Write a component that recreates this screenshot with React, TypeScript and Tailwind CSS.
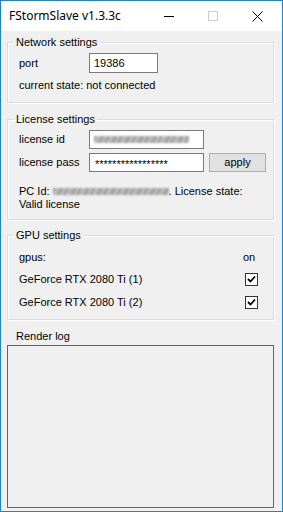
import React from "react";

function Check() {
  return (
    <div className="w-[13px] h-[13px] border border-[#333333] bg-white flex items-center justify-center">
      <svg width="9" height="9" viewBox="0 0 9 9">
        <path d="M1 4 L3.5 6.5 L8 1.5" fill="none" stroke="#000" strokeWidth="1.8" />
      </svg>
    </div>
  );
}

function Blur({ w }: { w: number }) {
  return (
    <span
      className="inline-block h-[7px] bg-[repeating-linear-gradient(115deg,#8c8c8c_0px,#c4c4c4_4px,#9a9a9a_8px,#d0d0d0_12px)] blur-[1px] align-middle"
      style={{ width: w }}
    />
  );
}

export default function App() {
  return (
    <div className="w-[283px] h-[512px] border border-[#1883d7] bg-[#f0f0f0] flex flex-col font-['Liberation_Sans',Arial,sans-serif] text-[11px] leading-[13px] text-black overflow-hidden">
      {/* Title bar */}
      <div className="h-[30px] bg-white flex items-center shrink-0">
        <span className="ml-[8px] font-['Noto_Sans',sans-serif] text-[12px] leading-[16px]">
          FStormSlave v1.3.3c
        </span>
        <div className="ml-auto mr-[3px] flex h-full">
          <div className="w-[44px] h-full flex items-center justify-center">
            <div className="w-[10px] h-px bg-black" />
          </div>
          <div className="w-[44px] h-full flex items-center justify-center">
            <div className="w-[10px] h-[10px] border border-[#cccccc]" />
          </div>
          <div className="w-[44px] h-full flex items-center justify-center">
            <svg width="11" height="11" viewBox="0 0 11 11">
              <path d="M0.5 0.5 L10.5 10.5 M10.5 0.5 L0.5 10.5" stroke="#000" strokeWidth="1" />
            </svg>
          </div>
        </div>
      </div>

      {/* Network settings */}
      <fieldset className="mt-[5px] ml-[6px] mr-[8px] border border-[#dcdcdc] shadow-[1px_1px_0_#ffffff,inset_1px_1px_0_#ffffff] pb-[10px]">
        <legend className="ml-[6px] px-[2px]">Network settings</legend>
        <div className="mt-[4px] flex items-center">
          <span className="ml-[11px] w-[70px]">port</span>
          <div className="w-[69px] h-[20px] border border-[#7a7a7a] bg-white flex items-center pl-[4px]">19386</div>
        </div>
        <div className="mt-[6px] ml-[11px]">current state: not connected</div>
      </fieldset>

      {/* License settings */}
      <fieldset className="mt-[10px] ml-[6px] mr-[8px] border border-[#dcdcdc] shadow-[1px_1px_0_#ffffff,inset_1px_1px_0_#ffffff] pb-[8px]">
        <legend className="ml-[6px] px-[2px]">License settings</legend>
        <div className="mt-[4px] flex items-center">
          <span className="ml-[11px] w-[70px]">license id</span>
          <div className="w-[115px] h-[19px] border border-[#7a7a7a] bg-white flex items-center pl-[4px]">
            <Blur w={95} />
          </div>
        </div>
        <div className="mt-[4px] flex items-center">
          <span className="ml-[11px] w-[70px]">license pass</span>
          <div className="w-[115px] h-[19px] border border-[#7a7a7a] bg-white flex items-center pl-[5px] pt-[3px]">
            *****************
          </div>
          <div className="ml-[5px] w-[57px] h-[19px] border border-[#adadad] bg-[#e1e1e1] flex items-center justify-center">
            apply
          </div>
        </div>
        <div className="mt-[13px] ml-[11px] flex items-center">
          <span>PC Id:</span>
          <span className="ml-[3px] flex"><Blur w={116} /></span>
          <span>. License state:</span>
        </div>
        <div className="ml-[11px]">Valid license</div>
      </fieldset>

      {/* GPU settings */}
      <fieldset className="mt-[9px] ml-[6px] mr-[8px] border border-[#dcdcdc] shadow-[1px_1px_0_#ffffff,inset_1px_1px_0_#ffffff] pb-[10px]">
        <legend className="ml-[6px] px-[2px]">GPU settings</legend>
        <div className="mt-[9px] flex items-center h-[13px]">
          <span className="ml-[11px] w-[224px]">gpus:</span>
          <span>on</span>
        </div>
        <div className="mt-[9px] flex items-center h-[13px]">
          <span className="ml-[11px] w-[226px]">GeForce RTX 2080 Ti (1)</span>
          <Check />
        </div>
        <div className="mt-[10px] flex items-center h-[13px]">
          <span className="ml-[11px] w-[226px]">GeForce RTX 2080 Ti (2)</span>
          <Check />
        </div>
      </fieldset>

      {/* Render log */}
      <div className="mt-[10px] ml-[15px]">Render log</div>
      <div className="mt-[2px] ml-[6px] mr-[8px] mb-[3px] flex-1 border border-[#646464] bg-[#f0f0f0]" />
    </div>
  );
}
